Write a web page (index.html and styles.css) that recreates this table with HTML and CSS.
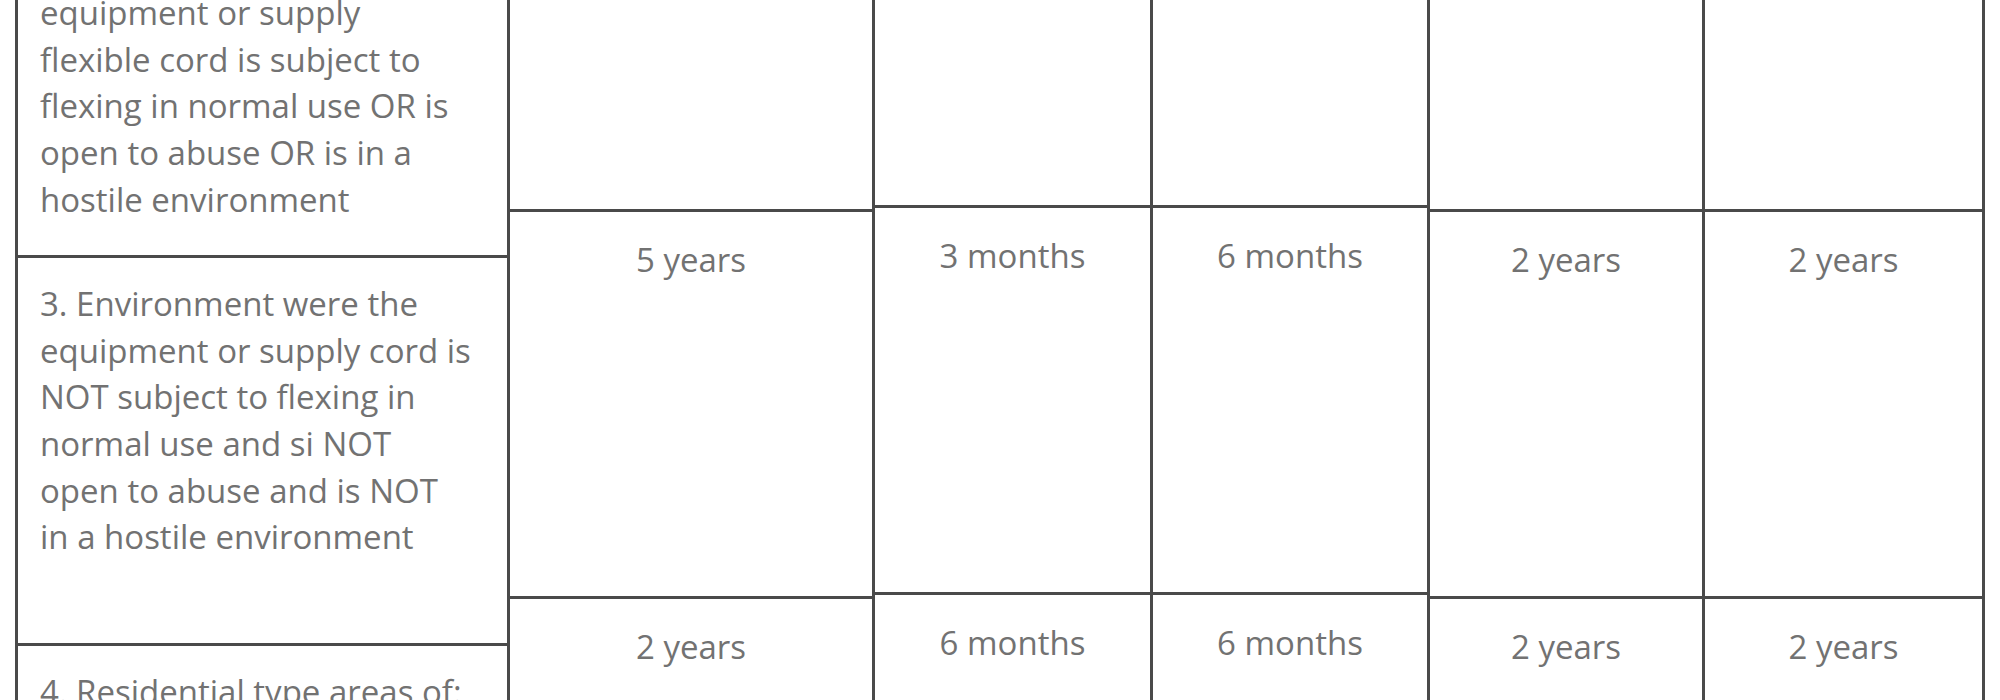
FILE: index.html
```html
<!DOCTYPE html>
<html lang="en">
<head>
<meta charset="utf-8">
<title>Test intervals</title>
<link rel="stylesheet" href="styles.css">
</head>
<body>
<div class="table">
  <div class="col col-label">
    <div class="cell cell-cut h-top-l"><div class="txt">equipment or supply flexible cord is subject to flexing in normal use OR is open to abuse OR is in a hostile environment</div></div>
    <div class="cell h-row-l">3. Environment were the equipment or supply cord is NOT subject to flexing in normal use and si NOT open to abuse and is NOT in a hostile environment</div>
    <div class="cell cell-last">4. Residential type areas of:</div>
  </div>
  <div class="col col-val">
    <div class="cell h-top-b"></div>
    <div class="cell h-row">5 years</div>
    <div class="cell cell-last">2 years</div>
  </div>
  <div class="col col-val">
    <div class="cell h-top-c"></div>
    <div class="cell h-row">3 months</div>
    <div class="cell cell-last">6 months</div>
  </div>
  <div class="col col-val">
    <div class="cell h-top-c"></div>
    <div class="cell h-row">6 months</div>
    <div class="cell cell-last">6 months</div>
  </div>
  <div class="col col-val">
    <div class="cell h-top-b"></div>
    <div class="cell h-row">2 years</div>
    <div class="cell cell-last">2 years</div>
  </div>
  <div class="col col-val">
    <div class="cell h-top-b"></div>
    <div class="cell h-row">2 years</div>
    <div class="cell cell-last">2 years</div>
  </div>
</div>
</body>
</html>
```

FILE: styles.css
```css
html, body {
  margin: 0;
  padding: 0;
  background: #ffffff;
  overflow: hidden;
}

body {
  font-family: "Open Sans", "Liberation Sans", sans-serif;
  font-size: 33px;
  line-height: 46.67px;
  color: #727272;
}

.table {
  display: grid;
  grid-template-columns: 492px 365px 278px 277px 275px 283px;
  align-items: start;
  margin-left: 15px;
}

.col {
  display: flex;
  flex-direction: column;
  border-left: 3px solid #4a4a4a;
}

.col:last-child {
  border-right: 3px solid #4a4a4a;
}

.cell {
  box-sizing: border-box;
  border-bottom: 3px solid #4a4a4a;
  padding: 23px 22px;
}

.col-label .cell {
  padding-right: 34px;
  text-align: left;
}

.col-val .cell {
  padding-top: 25px;
  padding-left: 8px;
  padding-right: 8px;
  text-align: center;
}

.cell-cut {
  padding-top: 0;
  overflow: hidden;
}

.col-label .cell-cut {
  padding-top: 0;
}

.cell-cut .txt {
  margin-top: -10px;
}

.h-top-l { height: 258px; }
.h-top-b { height: 212px; }
.h-top-c { height: 208px; }
.h-row-l { height: 388px; }
.h-row { height: 387px; }

.cell-last {
  height: 240px;
  border-bottom: none;
}
```
